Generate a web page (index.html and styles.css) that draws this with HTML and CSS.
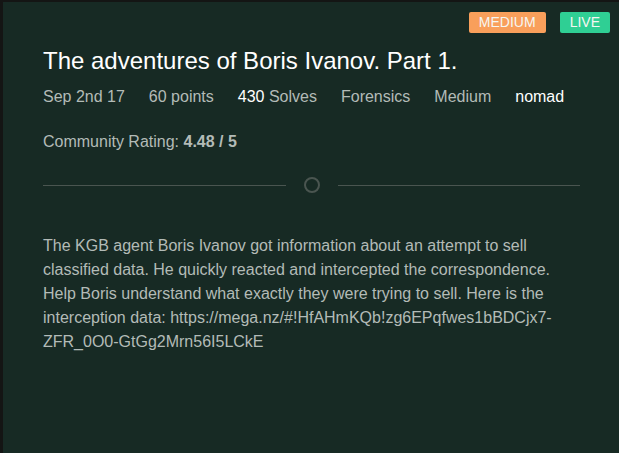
FILE: index.html
```html
<!DOCTYPE html>
<html>
<head>
<meta charset="utf-8">
<link rel="stylesheet" href="styles.css">
</head>
<body>
<div class="card">
  <div class="badges">
    <span class="badge badge-medium">MEDIUM</span>
    <span class="badge badge-live">LIVE</span>
  </div>
  <h1 class="title">The adventures of Boris Ivanov. Part 1.</h1>
  <div class="meta">
    <span>Sep 2nd 17</span>
    <span>60 points</span>
    <span><span class="hl">430</span> Solves</span>
    <span>Forensics</span>
    <span>Medium</span>
    <span class="hl">nomad</span>
  </div>
  <div class="rating">Community Rating: <b>4.48 / 5</b></div>
  <div class="divider">
    <span class="line"></span>
    <span class="dot"></span>
    <span class="line"></span>
  </div>
  <p class="desc">The KGB agent Boris Ivanov got information about an attempt to sell classified data. He quickly reacted and intercepted the correspondence. Help Boris understand what exactly they were trying to sell. Here is the interception data: https://mega.nz/#!HfAHmKQb!zg6EPqfwes1bBDCjx7-ZFR_0O0-GtGg2Mrn56I5LCkE</p>
</div>
</body>
</html>
```

FILE: styles.css
```css
html, body {
  margin: 0;
  padding: 0;
  height: 100%;
  background: #141514;
}
body {
  padding: 2px 0 0 3px;
  box-sizing: border-box;
  font-family: "Liberation Sans", Arial, sans-serif;
}
.card {
  position: relative;
  background: #172a24;
  height: 100%;
  box-sizing: border-box;
  padding: 44px 39px 0 40px;
  color: #b3bbb7;
}
.badges {
  position: absolute;
  top: 10px;
  right: 9px;
  display: flex;
  gap: 14px;
}
.badge {
  display: block;
  height: 21px;
  line-height: 21px;
  padding: 0 10px;
  border-radius: 2px;
  font-size: 14px;
  color: #f6f6f2;
}
.badge-medium { background: #f99f5b; }
.badge-live { background: #2fcf94; }
.title {
  margin: 0;
  font-weight: normal;
  font-size: 24px;
  line-height: 30px;
  color: #ffffff;
}
.meta {
  margin-top: 11px;
  display: flex;
  gap: 24px;
  font-size: 16px;
  line-height: 20px;
}
.hl { color: #ffffff; }
.rating {
  margin-top: 25px;
  font-size: 16px;
  line-height: 20px;
}
.rating b { font-weight: bold; }
.divider {
  margin-top: 25px;
  display: flex;
  align-items: center;
  gap: 18px;
}
.line {
  flex: 1;
  height: 1px;
  background: #4a5550;
}
.dot {
  width: 12px;
  height: 12px;
  border: 2px solid #4a5550;
  border-radius: 50%;
}
.desc {
  margin: 41px 0 0;
  font-size: 16px;
  line-height: 24px;
  color: #b3bbb7;
}
```
